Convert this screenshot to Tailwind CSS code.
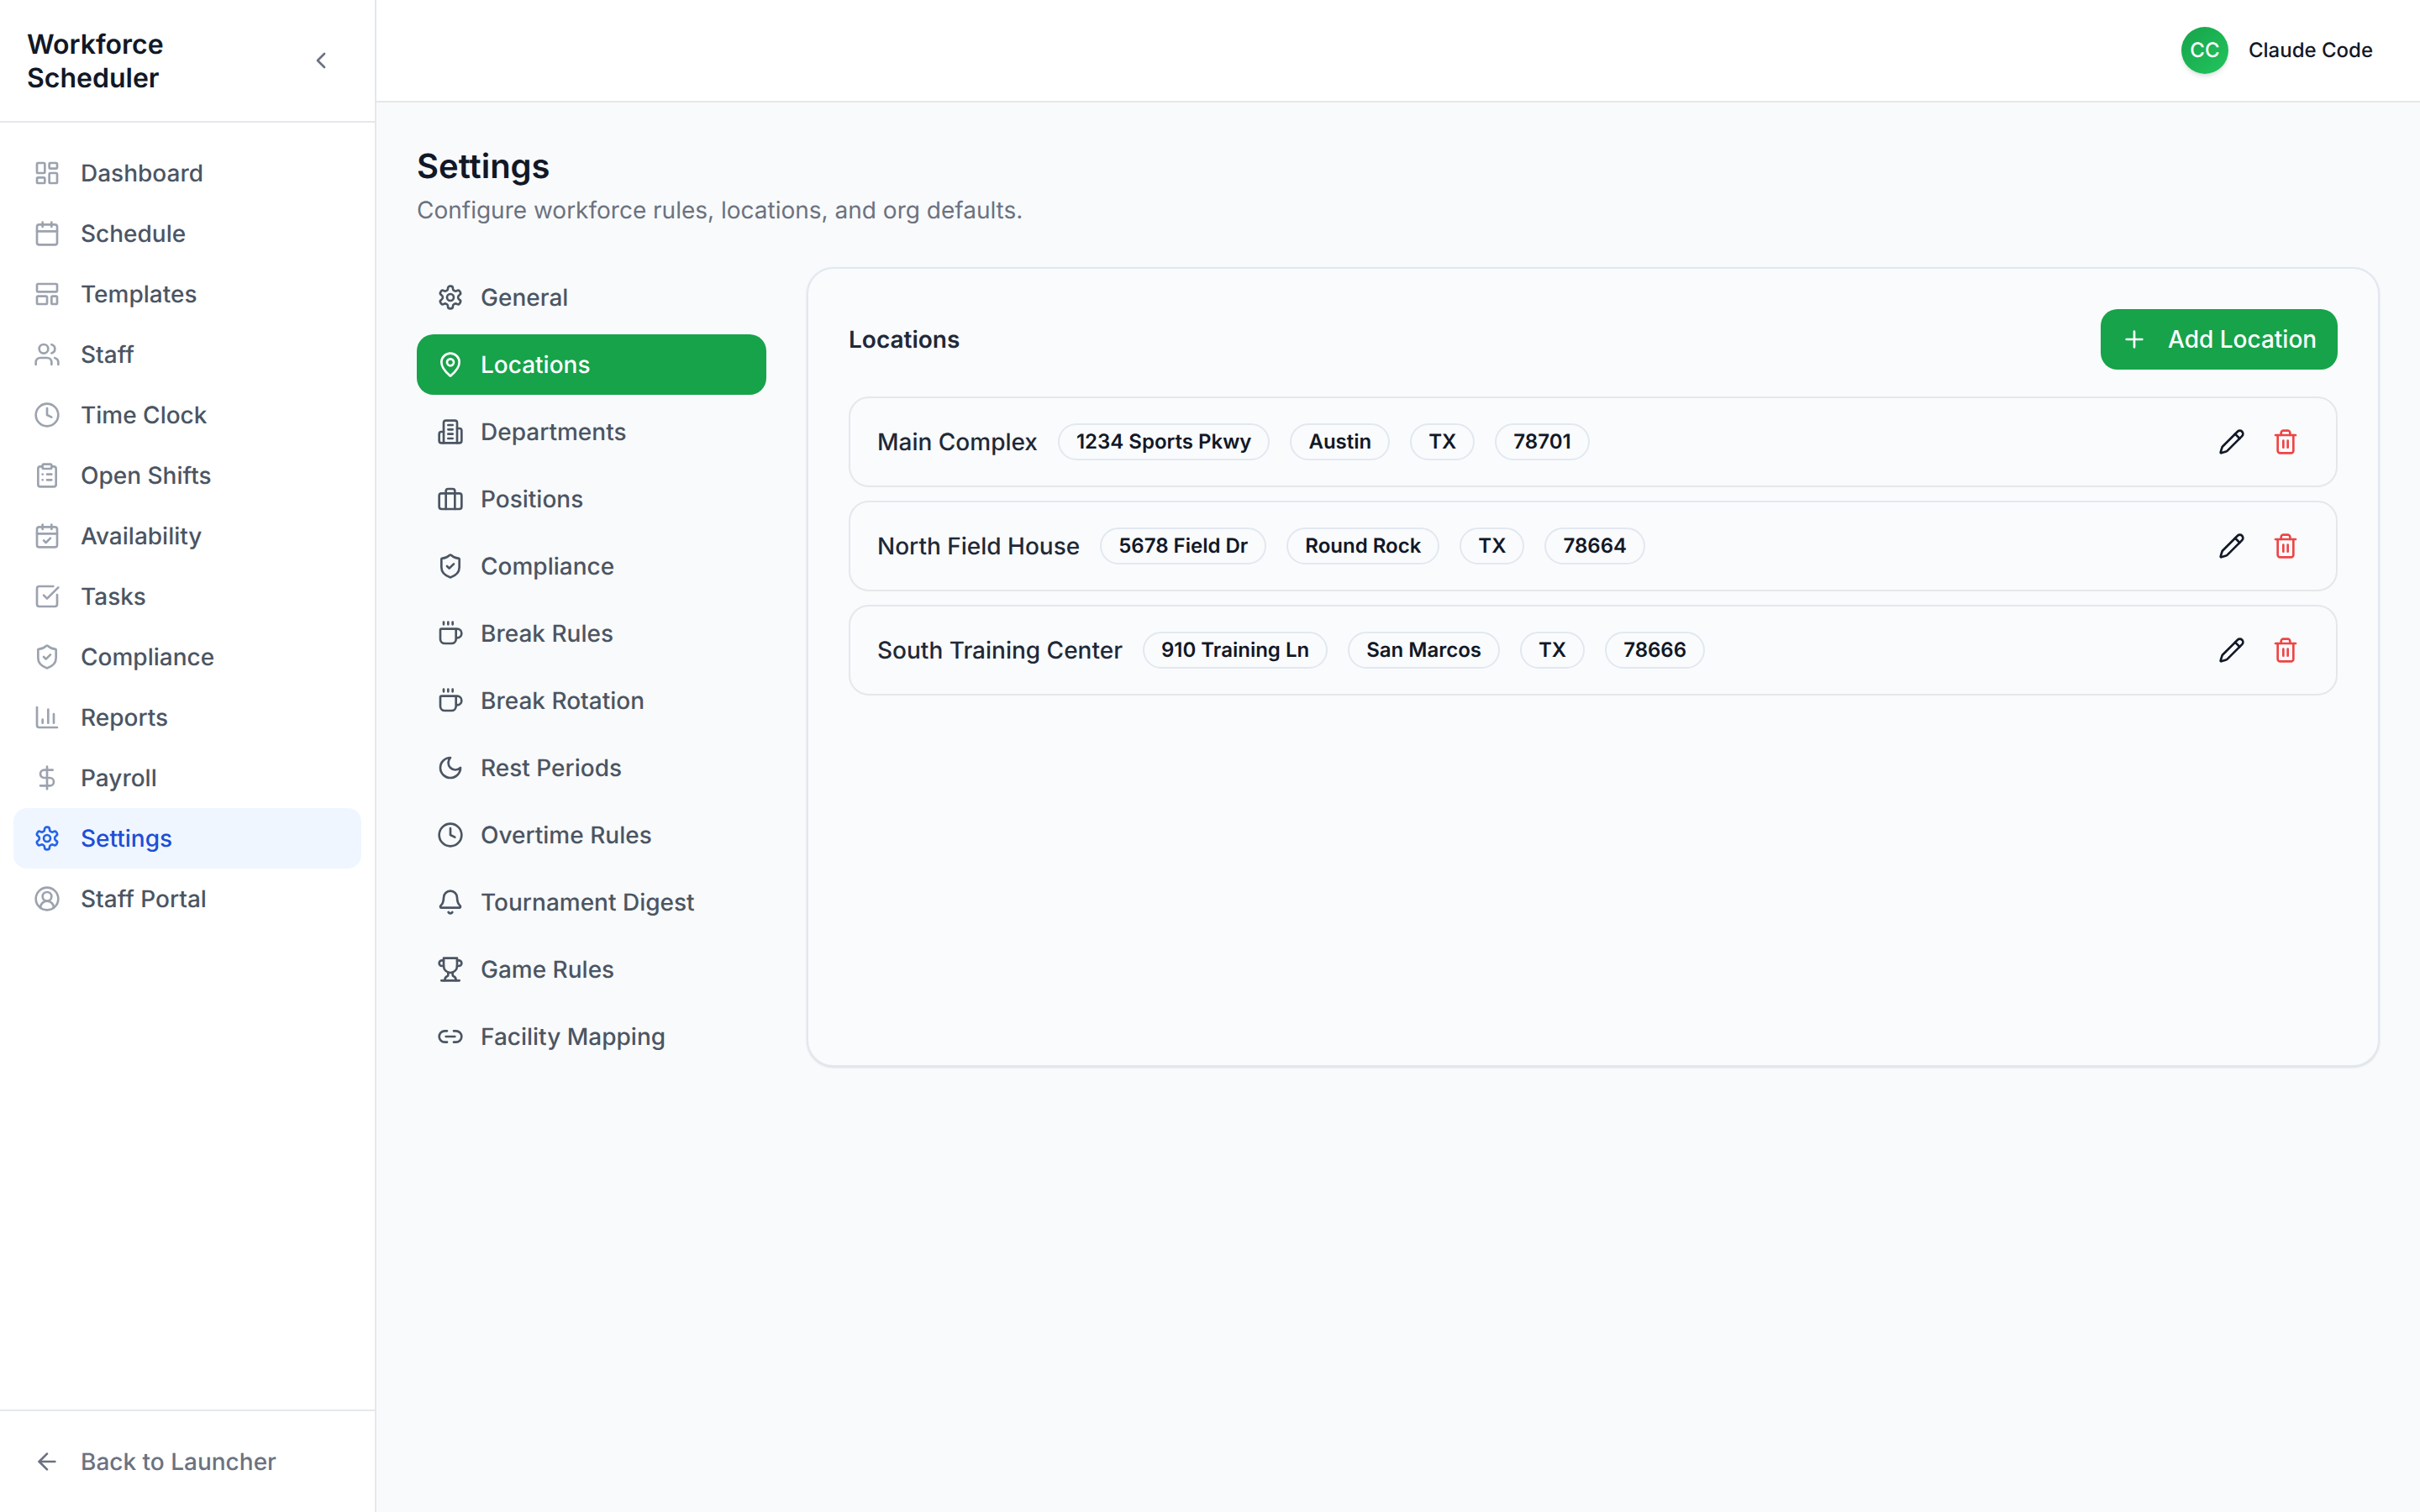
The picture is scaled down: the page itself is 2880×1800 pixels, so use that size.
<!DOCTYPE html>
<html lang="en">
<head>
  <meta charset="UTF-8" />
  <title>Workforce Scheduler - Settings</title>
  <script src="https://cdn.jsdelivr.net/npm/@tailwindcss/browser@4"></script>
</head>
<body class="font-[Inter,sans-serif] [text-rendering:geometricPrecision] bg-[#f9fafb] text-[#111827] h-screen overflow-hidden flex">
  <svg class="hidden">
    <defs>
      <symbol id="i-dashboard" viewBox="0 0 24 24"><rect x="3" y="3" width="7" height="9" rx="1"/><rect x="14" y="3" width="7" height="5" rx="1"/><rect x="14" y="12" width="7" height="9" rx="1"/><rect x="3" y="16" width="7" height="5" rx="1"/></symbol>
      <symbol id="i-calendar" viewBox="0 0 24 24"><path d="M8 2v4M16 2v4M3 10h18"/><rect x="3" y="4" width="18" height="18" rx="2"/></symbol>
      <symbol id="i-template" viewBox="0 0 24 24"><rect x="3" y="3" width="18" height="7" rx="1"/><rect x="3" y="14" width="9" height="7" rx="1"/><rect x="16" y="14" width="5" height="7" rx="1"/></symbol>
      <symbol id="i-users" viewBox="0 0 24 24"><path d="M16 21v-2a4 4 0 0 0-4-4H6a4 4 0 0 0-4 4v2"/><circle cx="9" cy="7" r="4"/><path d="M22 21v-2a4 4 0 0 0-3-3.87"/><path d="M16 3.13a4 4 0 0 1 0 7.75"/></symbol>
      <symbol id="i-clock" viewBox="0 0 24 24"><circle cx="12" cy="12" r="10"/><path d="M12 6v6l4 2"/></symbol>
      <symbol id="i-clipboard" viewBox="0 0 24 24"><rect x="8" y="2" width="8" height="4" rx="1"/><path d="M16 4h2a2 2 0 0 1 2 2v14a2 2 0 0 1-2 2H6a2 2 0 0 1-2-2V6a2 2 0 0 1 2-2h2"/><path d="M12 11h4M12 16h4M8 11h.01M8 16h.01"/></symbol>
      <symbol id="i-calendar-check" viewBox="0 0 24 24"><path d="M8 2v4M16 2v4M3 10h18"/><rect x="3" y="4" width="18" height="18" rx="2"/><path d="m9 16 2 2 4-4"/></symbol>
      <symbol id="i-square-check" viewBox="0 0 24 24"><path d="M21 10.5V19a2 2 0 0 1-2 2H5a2 2 0 0 1-2-2V5a2 2 0 0 1 2-2h12.5"/><path d="m9 11 3 3L22 4"/></symbol>
      <symbol id="i-shield" viewBox="0 0 24 24"><path d="M20 13c0 5-3.5 7.5-7.66 8.95a1 1 0 0 1-.67-.01C7.5 20.5 4 18 4 13V6a1 1 0 0 1 1-1c2 0 4.5-1.2 6.24-2.72a1.17 1.17 0 0 1 1.52 0C14.51 3.81 17 5 19 5a1 1 0 0 1 1 1z"/><path d="m9 12 2 2 4-4"/></symbol>
      <symbol id="i-chart" viewBox="0 0 24 24"><path d="M3 3v16a2 2 0 0 0 2 2h16"/><path d="M18 17V9M13 17V5M8 17v-3"/></symbol>
      <symbol id="i-dollar" viewBox="0 0 24 24"><path d="M12 2v20"/><path d="M17 5H9.5a3.5 3.5 0 0 0 0 7h5a3.5 3.5 0 0 1 0 7H6"/></symbol>
      <symbol id="i-settings" viewBox="0 0 24 24"><path d="M12.22 2h-.44a2 2 0 0 0-2 2v.18a2 2 0 0 1-1 1.73l-.43.25a2 2 0 0 1-2 0l-.15-.08a2 2 0 0 0-2.73.73l-.22.38a2 2 0 0 0 .73 2.73l.15.1a2 2 0 0 1 1 1.72v.51a2 2 0 0 1-1 1.74l-.15.09a2 2 0 0 0-.73 2.73l.22.38a2 2 0 0 0 2.73.73l.15-.08a2 2 0 0 1 2 0l.43.25a2 2 0 0 1 1 1.73V20a2 2 0 0 0 2 2h.44a2 2 0 0 0 2-2v-.18a2 2 0 0 1 1-1.73l.43-.25a2 2 0 0 1 2 0l.15.08a2 2 0 0 0 2.73-.73l.22-.39a2 2 0 0 0-.73-2.73l-.15-.08a2 2 0 0 1-1-1.74v-.5a2 2 0 0 1 1-1.74l.15-.09a2 2 0 0 0 .73-2.73l-.22-.38a2 2 0 0 0-2.73-.73l-.15.08a2 2 0 0 1-2 0l-.43-.25a2 2 0 0 1-1-1.73V4a2 2 0 0 0-2-2z"/><circle cx="12" cy="12" r="3"/></symbol>
      <symbol id="i-user" viewBox="0 0 24 24"><path d="M18 20a6 6 0 0 0-12 0"/><circle cx="12" cy="10" r="4"/><circle cx="12" cy="12" r="10"/></symbol>
      <symbol id="i-pin" viewBox="0 0 24 24"><path d="M20 10c0 4.993-5.539 10.193-7.399 11.799a1 1 0 0 1-1.202 0C9.539 20.193 4 14.993 4 10a8 8 0 0 1 16 0"/><circle cx="12" cy="10" r="3"/></symbol>
      <symbol id="i-building" viewBox="0 0 24 24"><path d="M6 22V4a2 2 0 0 1 2-2h8a2 2 0 0 1 2 2v18Z"/><path d="M6 12H4a2 2 0 0 0-2 2v6a2 2 0 0 0 2 2h2"/><path d="M18 9h2a2 2 0 0 1 2 2v9a2 2 0 0 1-2 2h-2"/><path d="M10 6h4M10 10h4M10 14h4M10 18h4"/></symbol>
      <symbol id="i-briefcase" viewBox="0 0 24 24"><rect x="2" y="7" width="20" height="14" rx="2"/><path d="M16 21V5a2 2 0 0 0-2-2h-4a2 2 0 0 0-2 2v16"/></symbol>
      <symbol id="i-coffee" viewBox="0 0 24 24"><path d="M10 2v2M14 2v2M6 2v2"/><path d="M16 8a1 1 0 0 1 1 1v8a4 4 0 0 1-4 4H7a4 4 0 0 1-4-4V9a1 1 0 0 1 1-1h14a4 4 0 1 1 0 8h-1"/></symbol>
      <symbol id="i-moon" viewBox="0 0 24 24"><path d="M12 3a6 6 0 0 0 9 9 9 9 0 1 1-9-9Z"/></symbol>
      <symbol id="i-bell" viewBox="0 0 24 24"><path d="M10.268 21a2 2 0 0 0 3.464 0"/><path d="M3.262 15.326A1 1 0 0 0 4 17h16a1 1 0 0 0 .74-1.673C19.41 13.956 18 12.499 18 8A6 6 0 0 0 6 8c0 4.499-1.411 5.956-2.738 7.326"/></symbol>
      <symbol id="i-trophy" viewBox="0 0 24 24"><path d="M6 9H4.5a2.5 2.5 0 0 1 0-5H6"/><path d="M18 9h1.5a2.5 2.5 0 0 0 0-5H18"/><path d="M4 22h16"/><path d="M10 14.66V17c0 .55-.47.98-.97 1.21C7.85 18.75 7 20.24 7 22"/><path d="M14 14.66V17c0 .55.47.98.97 1.21C16.15 18.75 17 20.24 17 22"/><path d="M18 2H6v7a6 6 0 0 0 12 0V2Z"/></symbol>
      <symbol id="i-link" viewBox="0 0 24 24"><path d="M9 17H7A5 5 0 0 1 7 7h2"/><path d="M15 7h2a5 5 0 1 1 0 10h-2"/><path d="M8 12h8"/></symbol>
      <symbol id="i-pencil" viewBox="0 0 24 24"><path d="M21.174 6.812a1 1 0 0 0-3.986-3.987L3.842 16.174a2 2 0 0 0-.5.83l-1.321 4.352a.5.5 0 0 0 .623.622l4.353-1.32a2 2 0 0 0 .83-.497z"/><path d="m15 5 4 4"/></symbol>
      <symbol id="i-trash" viewBox="0 0 24 24"><path d="M3 6h18"/><path d="M19 6v14c0 1-1 2-2 2H7c-1 0-2-1-2-2V6"/><path d="M8 6V4c0-1 1-2 2-2h4c1 0 2 1 2 2v2"/><path d="M10 11v6M14 11v6"/></symbol>
    </defs>
  </svg>

  <!-- Sidebar -->
  <aside class="w-[448px] shrink-0 h-full bg-white border-r-2 border-[#e5e7eb] flex flex-col">
    <div class="h-[146px] shrink-0 border-b-2 border-[#e5e7eb] pl-8 pr-12 flex items-center justify-between">
      <h2 class="pt-[2px] text-[32px] leading-[40px] font-semibold text-[#111827] w-[220px]">Workforce Scheduler</h2>
      <svg class="size-8 text-[#6b7280] fill-none stroke-current stroke-2" stroke-linecap="round" stroke-linejoin="round" viewBox="0 0 24 24"><path d="m15 18-6-6 6-6"/></svg>
    </div>
    <nav class="flex-1 pt-6 px-4 text-[28px] font-medium text-[#4b5563]">
      <a class="h-[72px] pl-6 flex items-center gap-6"><svg class="size-8 text-[#9ca3af] fill-none stroke-current stroke-2" stroke-linecap="round" stroke-linejoin="round"><use href="#i-dashboard"/></svg>Dashboard</a>
      <a class="h-[72px] pl-6 flex items-center gap-6"><svg class="size-8 text-[#9ca3af] fill-none stroke-current stroke-2" stroke-linecap="round" stroke-linejoin="round"><use href="#i-calendar"/></svg>Schedule</a>
      <a class="h-[72px] pl-6 flex items-center gap-6"><svg class="size-8 text-[#9ca3af] fill-none stroke-current stroke-2" stroke-linecap="round" stroke-linejoin="round"><use href="#i-template"/></svg>Templates</a>
      <a class="h-[72px] pl-6 flex items-center gap-6"><svg class="size-8 text-[#9ca3af] fill-none stroke-current stroke-2" stroke-linecap="round" stroke-linejoin="round"><use href="#i-users"/></svg>Staff</a>
      <a class="h-[72px] pl-6 flex items-center gap-6"><svg class="size-8 text-[#9ca3af] fill-none stroke-current stroke-2" stroke-linecap="round" stroke-linejoin="round"><use href="#i-clock"/></svg>Time Clock</a>
      <a class="h-[72px] pl-6 flex items-center gap-6"><svg class="size-8 text-[#9ca3af] fill-none stroke-current stroke-2" stroke-linecap="round" stroke-linejoin="round"><use href="#i-clipboard"/></svg>Open Shifts</a>
      <a class="h-[72px] pl-6 flex items-center gap-6"><svg class="size-8 text-[#9ca3af] fill-none stroke-current stroke-2" stroke-linecap="round" stroke-linejoin="round"><use href="#i-calendar-check"/></svg>Availability</a>
      <a class="h-[72px] pl-6 flex items-center gap-6"><svg class="size-8 text-[#9ca3af] fill-none stroke-current stroke-2" stroke-linecap="round" stroke-linejoin="round"><use href="#i-square-check"/></svg>Tasks</a>
      <a class="h-[72px] pl-6 flex items-center gap-6"><svg class="size-8 text-[#9ca3af] fill-none stroke-current stroke-2" stroke-linecap="round" stroke-linejoin="round"><use href="#i-shield"/></svg>Compliance</a>
      <a class="h-[72px] pl-6 flex items-center gap-6"><svg class="size-8 text-[#9ca3af] fill-none stroke-current stroke-2" stroke-linecap="round" stroke-linejoin="round"><use href="#i-chart"/></svg>Reports</a>
      <a class="h-[72px] pl-6 flex items-center gap-6"><svg class="size-8 text-[#9ca3af] fill-none stroke-current stroke-2" stroke-linecap="round" stroke-linejoin="round"><use href="#i-dollar"/></svg>Payroll</a>
      <a class="h-[72px] pl-6 flex items-center gap-6 bg-[#eff6ff] text-[#1d4ed8] rounded-2xl"><svg class="size-8 text-[#2563eb] fill-none stroke-current stroke-2" stroke-linecap="round" stroke-linejoin="round"><use href="#i-settings"/></svg>Settings</a>
      <a class="h-[72px] pl-6 flex items-center gap-6"><svg class="size-8 text-[#9ca3af] fill-none stroke-current stroke-2" stroke-linecap="round" stroke-linejoin="round"><use href="#i-user"/></svg>Staff Portal</a>
    </nav>
    <div class="h-[122px] shrink-0 border-t-2 border-[#e5e7eb] px-4 flex items-center">
      <a class="pl-6 flex items-center gap-6 text-[28px] font-medium text-[#6b7280]">
        <svg class="size-8 fill-none stroke-current stroke-2" stroke-linecap="round" stroke-linejoin="round" viewBox="0 0 24 24"><path d="m12 19-7-7 7-7"/><path d="M19 12H5"/></svg>
        Back to Launcher
      </a>
    </div>
  </aside>

  <div class="flex-1 min-w-0 h-full flex flex-col">
    <!-- Top bar -->
    <header class="h-[122px] shrink-0 bg-white border-b-2 border-[#e5e7eb] pr-[56px] flex items-center justify-end gap-6">
      <div class="size-14 rounded-full bg-gradient-to-br from-[#16a34a] to-[#22c55e] shadow-md text-white text-[24px] font-medium flex items-center justify-center">CC</div>
      <span class="text-[24px] font-medium text-[#111827]">Claude Code</span>
    </header>

    <main class="flex-1 p-12">
      <h1 class="text-[40px] leading-[56px] font-semibold text-[#111827]">Settings</h1>
      <p class="mt-1 text-[28px] leading-[40px] text-[#6b7280]">Configure workforce rules, locations, and org defaults.</p>

      <div class="mt-12 flex gap-12 items-stretch">
        <!-- Settings tabs -->
        <nav class="w-[416px] shrink-0 flex flex-col gap-2 text-[28px] font-medium text-[#4b5563]">
          <a class="h-[72px] pl-6 flex items-center gap-5"><svg class="size-8 fill-none stroke-current stroke-2" stroke-linecap="round" stroke-linejoin="round"><use href="#i-settings"/></svg>General</a>
          <a class="h-[72px] pl-6 flex items-center gap-5 bg-[#16a34a] text-white rounded-[20px]"><svg class="size-8 fill-none stroke-current stroke-2" stroke-linecap="round" stroke-linejoin="round"><use href="#i-pin"/></svg>Locations</a>
          <a class="h-[72px] pl-6 flex items-center gap-5"><svg class="size-8 fill-none stroke-current stroke-2" stroke-linecap="round" stroke-linejoin="round"><use href="#i-building"/></svg>Departments</a>
          <a class="h-[72px] pl-6 flex items-center gap-5"><svg class="size-8 fill-none stroke-current stroke-2" stroke-linecap="round" stroke-linejoin="round"><use href="#i-briefcase"/></svg>Positions</a>
          <a class="h-[72px] pl-6 flex items-center gap-5"><svg class="size-8 fill-none stroke-current stroke-2" stroke-linecap="round" stroke-linejoin="round"><use href="#i-shield"/></svg>Compliance</a>
          <a class="h-[72px] pl-6 flex items-center gap-5"><svg class="size-8 fill-none stroke-current stroke-2" stroke-linecap="round" stroke-linejoin="round"><use href="#i-coffee"/></svg>Break Rules</a>
          <a class="h-[72px] pl-6 flex items-center gap-5"><svg class="size-8 fill-none stroke-current stroke-2" stroke-linecap="round" stroke-linejoin="round"><use href="#i-coffee"/></svg>Break Rotation</a>
          <a class="h-[72px] pl-6 flex items-center gap-5"><svg class="size-8 fill-none stroke-current stroke-2" stroke-linecap="round" stroke-linejoin="round"><use href="#i-moon"/></svg>Rest Periods</a>
          <a class="h-[72px] pl-6 flex items-center gap-5"><svg class="size-8 fill-none stroke-current stroke-2" stroke-linecap="round" stroke-linejoin="round"><use href="#i-clock"/></svg>Overtime Rules</a>
          <a class="h-[72px] pl-6 flex items-center gap-5"><svg class="size-8 fill-none stroke-current stroke-2" stroke-linecap="round" stroke-linejoin="round"><use href="#i-bell"/></svg>Tournament Digest</a>
          <a class="h-[72px] pl-6 flex items-center gap-5"><svg class="size-8 fill-none stroke-current stroke-2" stroke-linecap="round" stroke-linejoin="round"><use href="#i-trophy"/></svg>Game Rules</a>
          <a class="h-[72px] pl-6 flex items-center gap-5"><svg class="size-8 fill-none stroke-current stroke-2" stroke-linecap="round" stroke-linejoin="round"><use href="#i-link"/></svg>Facility Mapping</a>
        </nav>

        <!-- Locations card -->
        <section class="flex-1 min-w-0 bg-[#fafbfd] border-2 border-[#e2e8f0] rounded-[32px] p-12 shadow-sm">
          <div class="flex items-center justify-between mb-8">
            <h3 class="text-[28px] font-semibold text-[#1f2937]">Locations</h3>
            <button class="h-[72px] w-[282px] pl-6 bg-[#16a34a] text-white rounded-[20px] text-[28px] font-medium flex items-center gap-6">
              <svg class="size-8 fill-none stroke-current stroke-2" stroke-linecap="round" stroke-linejoin="round" viewBox="0 0 24 24"><path d="M5 12h14M12 5v14"/></svg>
              Add Location
            </button>
          </div>
          <div class="flex flex-col gap-4">
            <div class="h-[108px] border-2 border-[#e5e7eb] rounded-3xl pl-8 pr-11 flex items-center">
              <span class="text-[28px] font-medium text-[#1f2937] mr-6">Main Complex</span>
              <div class="flex-1 flex gap-6 text-[24px] font-semibold text-[#111827]">
                <span class="h-11 px-5 border-2 border-[#e2e8f0] rounded-full flex items-center">1234 Sports Pkwy</span>
                <span class="h-11 px-5 border-2 border-[#e2e8f0] rounded-full flex items-center">Austin</span>
                <span class="h-11 px-5 border-2 border-[#e2e8f0] rounded-full flex items-center">TX</span>
                <span class="h-11 px-5 border-2 border-[#e2e8f0] rounded-full flex items-center">78701</span>
              </div>
              <div class="flex gap-8">
                <svg class="size-8 text-[#111827] fill-none stroke-current stroke-2" stroke-linecap="round" stroke-linejoin="round"><use href="#i-pencil"/></svg>
                <svg class="size-8 text-[#ef4444] fill-none stroke-current stroke-2" stroke-linecap="round" stroke-linejoin="round"><use href="#i-trash"/></svg>
              </div>
            </div>
            <div class="h-[108px] border-2 border-[#e5e7eb] rounded-3xl pl-8 pr-11 flex items-center">
              <span class="text-[28px] font-medium text-[#1f2937] mr-6">North Field House</span>
              <div class="flex-1 flex gap-6 text-[24px] font-semibold text-[#111827]">
                <span class="h-11 px-5 border-2 border-[#e2e8f0] rounded-full flex items-center">5678 Field Dr</span>
                <span class="h-11 px-5 border-2 border-[#e2e8f0] rounded-full flex items-center">Round Rock</span>
                <span class="h-11 px-5 border-2 border-[#e2e8f0] rounded-full flex items-center">TX</span>
                <span class="h-11 px-5 border-2 border-[#e2e8f0] rounded-full flex items-center">78664</span>
              </div>
              <div class="flex gap-8">
                <svg class="size-8 text-[#111827] fill-none stroke-current stroke-2" stroke-linecap="round" stroke-linejoin="round"><use href="#i-pencil"/></svg>
                <svg class="size-8 text-[#ef4444] fill-none stroke-current stroke-2" stroke-linecap="round" stroke-linejoin="round"><use href="#i-trash"/></svg>
              </div>
            </div>
            <div class="h-[108px] border-2 border-[#e5e7eb] rounded-3xl pl-8 pr-11 flex items-center">
              <span class="text-[28px] font-medium text-[#1f2937] mr-6">South Training Center</span>
              <div class="flex-1 flex gap-6 text-[24px] font-semibold text-[#111827]">
                <span class="h-11 px-5 border-2 border-[#e2e8f0] rounded-full flex items-center">910 Training Ln</span>
                <span class="h-11 px-5 border-2 border-[#e2e8f0] rounded-full flex items-center">San Marcos</span>
                <span class="h-11 px-5 border-2 border-[#e2e8f0] rounded-full flex items-center">TX</span>
                <span class="h-11 px-5 border-2 border-[#e2e8f0] rounded-full flex items-center">78666</span>
              </div>
              <div class="flex gap-8">
                <svg class="size-8 text-[#111827] fill-none stroke-current stroke-2" stroke-linecap="round" stroke-linejoin="round"><use href="#i-pencil"/></svg>
                <svg class="size-8 text-[#ef4444] fill-none stroke-current stroke-2" stroke-linecap="round" stroke-linejoin="round"><use href="#i-trash"/></svg>
              </div>
            </div>
          </div>
        </section>
      </div>
    </main>
  </div>
</body>
</html>
